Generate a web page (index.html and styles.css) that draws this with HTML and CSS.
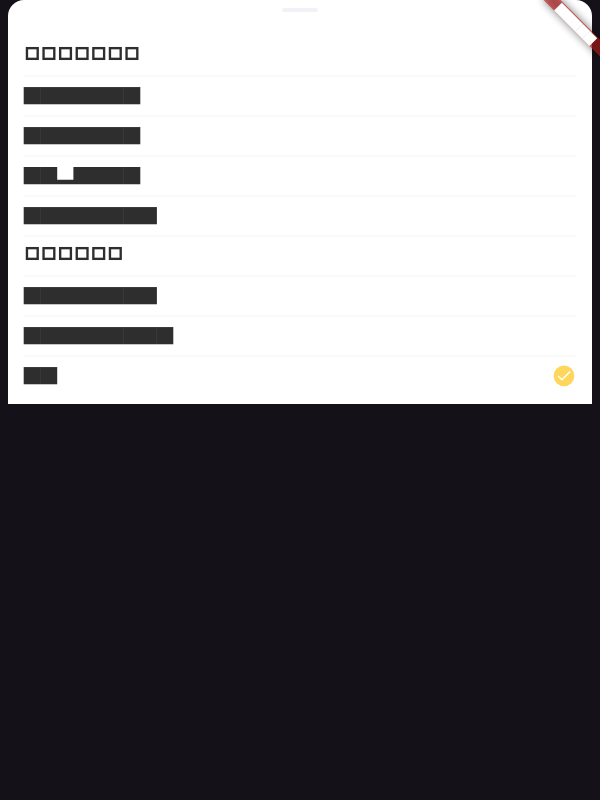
FILE: index.html
```
<!DOCTYPE html>
<html lang="en">
<head>
<meta charset="utf-8">
<title>Selection sheet</title>
<link rel="stylesheet" href="styles.css">
</head>
<body>
<svg class="defs" aria-hidden="true">
  <defs>
    <rect id="box" x="3.95" y="2.15" width="10.75" height="10.7" fill="none" stroke="#2e2e2e" stroke-width="2.35"/>
    <path id="seams" d="M17.5 1v17M100.5 1v17" stroke="#383838" stroke-width="1"/>
  </defs>
</svg>
<main class="sheet">
  <div class="handle"></div>
  <ul class="list">
    <li class="row"><svg class="glyphs"><use href="#box"/><use href="#box" x="16.6"/><use href="#box" x="33.2"/><use href="#box" x="49.8"/><use href="#box" x="66.4"/><use href="#box" x="83"/><use href="#box" x="99.6"/></svg></li>
    <li class="row"><svg class="glyphs"><rect class="ink" x="0.7" y="1.07" width="116.6" height="17.2"/><use href="#seams"/></svg></li>
    <li class="row"><svg class="glyphs"><rect class="ink" x="0.7" y="1.07" width="116.6" height="17.2"/><use href="#seams"/></svg></li>
    <li class="row"><svg class="glyphs"><path class="ink" d="M.7 1.07H34.2V13.75H50.4V1.07H117.3V18.27H.7z"/><use href="#seams"/></svg></li>
    <li class="row"><svg class="glyphs"><rect class="ink" x="0.7" y="1.07" width="133.2" height="17.2"/><use href="#seams"/></svg></li>
    <li class="row"><svg class="glyphs"><use href="#box"/><use href="#box" x="16.6"/><use href="#box" x="33.2"/><use href="#box" x="49.8"/><use href="#box" x="66.4"/><use href="#box" x="83"/></svg></li>
    <li class="row"><svg class="glyphs"><rect class="ink" x="0.7" y="1.07" width="133.2" height="17.2"/><use href="#seams"/></svg></li>
    <li class="row"><svg class="glyphs"><rect class="ink" x="0.7" y="1.07" width="149.6" height="17.2"/><use href="#seams"/><path d="M133.5 1v17" stroke="#383838"/></svg></li>
    <li class="row"><svg class="glyphs"><rect class="ink" x="0.7" y="1.07" width="33.5" height="17.2"/><path d="M17.5 1v17" stroke="#383838"/></svg>
      <svg class="check" viewBox="0 0 24 24"><circle cx="12" cy="11.9" r="10.3" fill="#ffd65c"/><path d="M6 11.9l4 3.8 8.1-8.2" fill="none" stroke="#fff" stroke-width="1.4"/></svg>
    </li>
  </ul>
</main>
<div class="corner">
  <div class="ribbon-shadow"></div>
  <div class="ribbon"><div class="ribbon-label"><i></i><i></i><i></i><i></i><i></i></div></div>
</div>
</body>
</html>
```
FILE: styles.css
```
body {
  margin: 0;
  min-height: 100vh;
  background: #141218;
  font-family: Roboto, sans-serif;
  overflow: hidden;
}
.defs {
  display: none;
}
.sheet {
  box-sizing: border-box;
  height: 404px;
  margin: 0 8px;
  padding: 8px 16px;
  background: #fff;
  border-radius: 16px 16px 0 0;
}
.handle {
  width: 36px;
  height: 4px;
  margin: 0 auto 25px;
  border-radius: 2px;
  background: #f2f1f7;
}
.list {
  list-style: none;
  margin: 0;
  padding: 0;
}
.row {
  box-sizing: border-box;
  display: flex;
  align-items: flex-start;
  height: 40px;
  padding-top: 9px;
  border-bottom: 2px solid #f9f9f9;
}
.row:last-child {
  border-bottom: 0;
}
.glyphs {
  width: 160px;
  height: 20px;
  margin-left: -1px;
}
.ink {
  fill: #2e2e2e;
}
.check {
  width: 24px;
  height: 24px;
  margin: -2px 0 0 auto;
}
.corner {
  position: absolute;
  top: 0;
  right: 0;
  width: 80px;
  height: 80px;
  overflow: hidden;
}
.ribbon,
.ribbon-shadow {
  position: absolute;
  left: 16px;
  top: 18px;
  width: 80px;
  height: 12px;
  transform: rotate(45deg);
}
.ribbon-shadow {
  background: rgba(0, 0, 0, 0.5);
  filter: blur(4px);
}
.ribbon {
  display: flex;
  align-items: flex-end;
  justify-content: center;
  background: rgba(183, 28, 28, 0.63);
}
.ribbon-label {
  display: flex;
  background: #fff;
}
.ribbon-label i {
  width: 10.2px;
  height: 11px;
}
.ribbon-label i + i {
  box-shadow: -0.3px 0 0 #f3e6e6;
}
```
